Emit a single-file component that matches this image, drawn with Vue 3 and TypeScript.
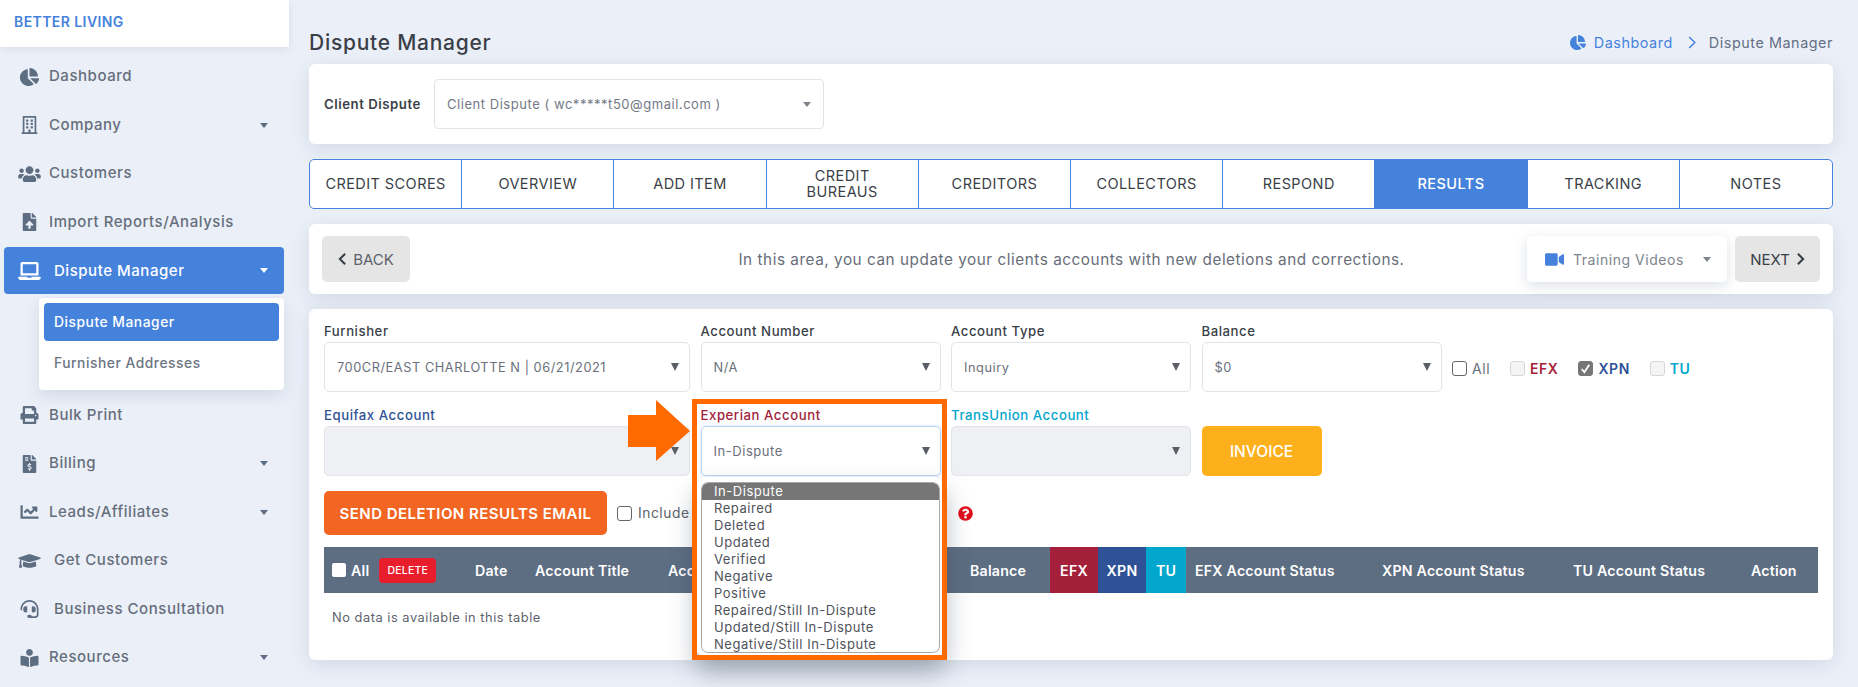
<template>
  <div class="page">
    <aside class="side">
      <div class="brand">BETTER LIVING</div>
      <nav class="nav">
        <template v-for="item in navItems" :key="item.label">
          <div class="nav-item" :class="{ 'nav-item--on': item.active }">
            <svg class="nav-icon" :viewBox="icons[item.icon].box"><path :d="icons[item.icon].d" /></svg>
            <span class="nav-label" :class="{ 'nav-label--far': item.far }">{{ item.label }}</span>
            <i v-if="item.caret" class="caret"></i>
          </div>
          <div v-if="item.active" class="sub">
            <div class="sub-item sub-item--on">Dispute Manager</div>
            <div class="sub-item">Furnisher Addresses</div>
          </div>
        </template>
      </nav>
    </aside>

    <main class="main">
      <div class="title-row">
        <h1 class="title">Dispute Manager</h1>
        <div class="crumbs">
          <svg class="crumb-icon" :viewBox="icons.pie.box"><path :d="icons.pie.d" /></svg>
          <span class="crumb-link">Dashboard</span>
          <svg class="crumb-sep" viewBox="0 0 8 14"><path d="M1 1l6 6-6 6" /></svg>
          <span>Dispute Manager</span>
        </div>
      </div>

      <section class="card client">
        <label class="client-label">Client Dispute</label>
        <div class="client-select">
          <span>Client Dispute ( wc*****t50@gmail.com )</span>
          <i class="caret caret--grey"></i>
        </div>
      </section>

      <div class="tabs">
        <div v-for="tab in tabs" :key="tab" class="tab" :class="{ 'tab--on': tab === 'RESULTS' }">{{ tab }}</div>
      </div>

      <section class="card steps">
        <button class="step-btn">
          <svg class="chev" viewBox="0 0 10 16"><path d="M8 2L2 8l6 6" /></svg>
          BACK
        </button>
        <p class="steps-text">In this area, you can update your clients accounts with new deletions and corrections.</p>
        <div class="training">
          <svg class="video" :viewBox="icons.video.box"><path :d="icons.video.d" /></svg>
          <span>Training Videos</span>
          <i class="caret caret--grey"></i>
        </div>
        <button class="step-btn step-btn--next">
          NEXT
          <svg class="chev" viewBox="0 0 10 16"><path d="M2 2l6 6-6 6" /></svg>
        </button>
      </section>

      <section class="card form">
        <div class="fields">
          <div v-for="f in fields" :key="f.label" class="field">
            <label class="field-label" :class="f.tone">{{ f.label }}</label>
            <div class="select" :class="{ 'select--off': f.off, 'select--focus': f.focus }">
              <span>{{ f.value }}</span>
              <i class="arrow"></i>
            </div>
          </div>
          <div class="invoice-cell"><button class="invoice">INVOICE</button></div>
        </div>

        <div class="bureau-checks">
          <span class="check"><i class="box box--dark"></i><span class="check-all">All</span></span>
          <span class="check"><i class="box"></i><b class="efx">EFX</b></span>
          <span class="check"><i class="box box--on">
            <svg viewBox="0 0 14 14"><path d="M3 7.5l2.8 3.5L11 3" /></svg>
          </i><b class="xpn">XPN</b></span>
          <span class="check"><i class="box"></i><b class="tu">TU</b></span>
        </div>

        <div class="send-row">
          <button class="send">SEND DELETION RESULTS EMAIL</button>
          <i class="box box--dark"></i>
          <span class="include">Include Deleted Results Only to Customers</span>
          <svg class="help" :viewBox="icons.help.box"><path :d="icons.help.d" /></svg>
        </div>

        <div class="thead">
          <div class="th th--all"><i class="head-box"></i><span>All</span><span class="del">DELETE</span></div>
          <div v-for="c in columns" :key="c.label" class="th" :class="c.cls">{{ c.label }}</div>
        </div>
        <p class="empty">No data is available in this table</p>
      </section>
    </main>

    <!-- annotation drawn over the page -->
    <svg class="mark-arrow" viewBox="0 0 62 61"><path d="M0 15h28V0l34 31-34 30V47H0z" /></svg>
    <ul class="options">
      <li v-for="(o, i) in options" :key="o" class="option" :class="{ 'option--on': i === 0 }">{{ o }}</li>
    </ul>
    <div class="mark-frame"></div>
  </div>
</template>

<script setup lang="ts">
interface Icon {
  box: string;
  d: string;
}
interface NavItem {
  label: string;
  icon: string;
  caret?: boolean;
  active?: boolean;
  far?: boolean;
}

const icons: Record<string, Icon> = {
  pie: { box: "0 0 544 512", d: "M527.79 288H290.5l158.03 158.03c6.04 6.04 15.98 6.53 22.19.68 38.7-36.46 65.32-85.61 73.13-140.86 1.34-9.46-6.51-17.85-16.06-17.85zm-15.83-64.8C503.72 103.74 408.26 8.28 288.8.04 279.68-.59 272 7.1 272 16.24V240h223.77c9.14 0 16.82-7.68 16.19-16.8zM224 288V50.71c0-9.55-8.39-17.4-17.84-16.06C86.99 51.49-4.1 155.6.14 280.37 4.5 408.51 114.83 513.59 243.03 511.98c50.4-.63 96.97-16.87 135.26-44.03 7.9-5.6 8.42-17.23 1.57-24.08L224 288z" },
  building: { box: "0 0 448 512", d: "M128 148v-40c0-6.6 5.4-12 12-12h40c6.6 0 12 5.4 12 12v40c0 6.6-5.4 12-12 12h-40c-6.6 0-12-5.4-12-12zm140 12h40c6.6 0 12-5.4 12-12v-40c0-6.6-5.4-12-12-12h-40c-6.6 0-12 5.4-12 12v40c0 6.6 5.4 12 12 12zm-128 96h40c6.6 0 12-5.4 12-12v-40c0-6.6-5.4-12-12-12h-40c-6.6 0-12 5.4-12 12v40c0 6.6 5.4 12 12 12zm128 0h40c6.6 0 12-5.4 12-12v-40c0-6.6-5.4-12-12-12h-40c-6.6 0-12 5.4-12 12v40c0 6.6 5.4 12 12 12zm-76 84v-40c0-6.6-5.4-12-12-12h-40c-6.6 0-12 5.4-12 12v40c0 6.6 5.4 12 12 12h40c6.6 0 12-5.4 12-12zm76 12h40c6.6 0 12-5.4 12-12v-40c0-6.6-5.4-12-12-12h-40c-6.6 0-12 5.4-12 12v40c0 6.6 5.4 12 12 12zm180 124v36H0v-36c0-6.6 5.4-12 12-12h19.5V24c0-13.3 10.7-24 24-24h337c13.3 0 24 10.7 24 24v440H436c6.6 0 12 5.4 12 12zM79.5 463H192v-67c0-6.6 5.4-12 12-12h40c6.6 0 12 5.4 12 12v67h112.5V49L80 48l-.5 415z" },
  users: { box: "0 0 640 512", d: "M96 224c35.3 0 64-28.7 64-64s-28.7-64-64-64-64 28.7-64 64 28.7 64 64 64zm448 0c35.3 0 64-28.7 64-64s-28.7-64-64-64-64 28.7-64 64 28.7 64 64 64zm32 32h-64c-17.6 0-33.5 7.1-45.1 18.6 40.3 22.1 68.9 62 75.1 109.4h66c17.7 0 32-14.3 32-32v-32c0-35.3-28.7-64-64-64zm-256 0c61.9 0 112-50.1 112-112S381.9 32 320 32 208 82.1 208 144s50.1 112 112 112zm76.8 32h-8.3c-20.8 10-43.9 16-68.5 16s-47.6-6-68.5-16h-8.3C179.6 288 128 339.6 128 403.2V432c0 26.5 21.5 48 48 48h288c26.5 0 48-21.5 48-48v-28.8c0-63.6-51.6-115.2-115.2-115.2zm-223.7-13.4C161.5 263.1 145.6 256 128 256H64c-35.3 0-64 28.7-64 64v32c0 17.7 14.3 32 32 32h65.9c6.3-47.4 34.9-87.3 75.2-109.4z" },
  upload: { box: "0 0 384 512", d: "M224 136V0H24C10.7 0 0 10.7 0 24v464c0 13.3 10.7 24 24 24h336c13.3 0 24-10.7 24-24V160H248c-13.2 0-24-10.8-24-24zm65.18 216.01H224v80c0 8.84-7.16 16-16 16h-32c-8.84 0-16-7.16-16-16v-80H94.82c-14.28 0-21.41-17.29-11.27-27.36l96.42-95.7c6.65-6.61 17.39-6.61 24.04 0l96.42 95.7c10.15 10.07 3.03 27.36-11.25 27.36zM377 105L279.1 7c-4.5-4.5-10.6-7-17-7H256v128h128v-6.1c0-6.3-2.5-12.4-7-16.9z" },
  laptop: { box: "0 0 640 512", d: "M624 416H381.54c-.74 19.81-14.71 32-32.74 32H288c-18.69 0-33.02-17.47-32.77-32H16c-8.8 0-16 7.2-16 16v16c0 35.2 28.8 64 64 64h512c35.2 0 64-28.8 64-64v-16c0-8.8-7.2-16-16-16zM576 48c0-26.4-21.6-48-48-48H112C85.6 0 64 21.6 64 48v336h512V48zm-64 272H128V64h384v256z" },
  print: { box: "0 0 512 512", d: "M448 192V77.25c0-8.49-3.37-16.62-9.37-22.63L393.37 9.37c-6-6-14.14-9.37-22.63-9.37H96C78.33 0 64 14.33 64 32v160c-35.35 0-64 28.65-64 64v112c0 8.84 7.16 16 16 16h48v96c0 17.67 14.33 32 32 32h320c17.67 0 32-14.33 32-32v-96h48c8.84 0 16-7.16 16-16V256c0-35.35-28.65-64-64-64zm-64 256H128v-96h256v96zm0-224H128V64h192v48c0 8.84 7.16 16 16 16h48v96zm48 72c-13.25 0-24-10.75-24-24 0-13.26 10.75-24 24-24s24 10.74 24 24c0 13.25-10.75 24-24 24z" },
  invoice: { box: "0 0 384 512", d: "M377 105L279.1 7c-4.5-4.5-10.6-7-17-7H256v128h128v-6.1c0-6.3-2.5-12.4-7-16.9zm-153 31V0H24C10.7 0 0 10.7 0 24v464c0 13.3 10.7 24 24 24h336c13.3 0 24-10.7 24-24V160H248c-13.2 0-24-10.8-24-24zM64 72c0-4.42 3.58-8 8-8h80c4.42 0 8 3.58 8 8v16c0 4.42-3.58 8-8 8H72c-4.42 0-8-3.58-8-8V72zm0 80v-16c0-4.42 3.58-8 8-8h80c4.42 0 8 3.58 8 8v16c0 4.42-3.58 8-8 8H72c-4.42 0-8-3.58-8-8zm144 263.88V440c0 4.42-3.58 8-8 8h-16c-4.42 0-8-3.58-8-8v-24.29c-11.29-.58-22.27-4.52-31.37-11.35-3.9-2.93-4.1-8.77-.57-12.14l11.75-11.21c2.77-2.64 6.89-2.76 10.13-.73 3.87 2.42 8.26 3.72 12.82 3.72h28.11c6.5 0 11.8-5.92 11.8-13.19 0-5.95-3.61-11.19-8.77-12.73l-45-13.5c-18.59-5.58-31.58-23.42-31.58-43.39 0-24.52 19.05-44.44 42.67-45.07V232c0-4.42 3.58-8 8-8h16c4.42 0 8 3.58 8 8v24.29c11.29.58 22.27 4.51 31.37 11.35 3.9 2.93 4.1 8.77.57 12.14l-11.75 11.21c-2.77 2.64-6.89 2.76-10.13.73-3.87-2.43-8.26-3.72-12.82-3.72h-28.11c-6.5 0-11.8 5.92-11.8 13.19 0 5.95 3.61 11.19 8.77 12.73l45 13.5c18.59 5.58 31.58 23.42 31.58 43.39 0 24.53-19.05 44.44-42.67 45.07z" },
  line: { box: "0 0 512 512", d: "M496 384H64V80c0-8.84-7.16-16-16-16H16C7.16 64 0 71.16 0 80v336c0 17.67 14.33 32 32 32h464c8.84 0 16-7.16 16-16v-32c0-8.84-7.16-16-16-16zM464 96H345.94c-21.38 0-32.09 25.85-16.97 40.97l32.4 32.4L288 242.75l-73.37-73.37c-12.5-12.5-32.76-12.5-45.25 0l-68.69 68.69c-6.25 6.25-6.25 16.38 0 22.63l22.62 22.62c6.25 6.25 16.38 6.25 22.63 0L192 237.25l73.37 73.37c12.5 12.5 32.76 12.5 45.25 0l96-96 32.4 32.4c15.12 15.12 40.97 4.41 40.97-16.97V112c.01-8.84-7.15-16-16-16z" },
  cap: { box: "0 0 640 512", d: "M622.34 153.2L343.4 67.5c-15.2-4.67-31.6-4.67-46.79 0L17.66 153.2c-23.54 7.23-23.54 38.36 0 45.59l48.63 14.94c-10.67 13.19-17.23 29.28-17.88 46.9C38.78 266.15 32 276.11 32 288c0 10.78 5.68 19.85 13.86 25.65L20.33 428.53C18.11 438.52 25.71 448 35.94 448h56.11c10.24 0 17.84-9.48 15.62-19.47L82.14 313.65C90.32 307.85 96 298.78 96 288c0-11.57-6.47-21.25-15.66-26.87.76-15.02 8.44-28.3 20.69-36.72L296.6 284.5c9.06 2.78 26.44 6.25 46.79 0l278.95-85.7c23.55-7.24 23.55-38.36 0-45.6zM352.79 315.09c-28.53 8.76-52.84 3.92-65.59 0l-145.02-44.55L128 384c0 35.35 85.96 64 192 64s192-28.65 192-64l-14.18-113.47-145.03 44.56z" },
  headset: { box: "0 0 512 512", d: "M192 208c0-17.67-14.33-32-32-32h-16c-35.35 0-64 28.65-64 64v48c0 35.35 28.65 64 64 64h16c17.67 0 32-14.33 32-32V208zm176 144c35.35 0 64-28.65 64-64v-48c0-35.35-28.65-64-64-64h-16c-17.67 0-32 14.33-32 32v112c0 17.67 14.33 32 32 32h16zM256 0C113.18 0 4.58 118.83 0 256v16c0 8.84 7.16 16 16 16h16c8.84 0 16-7.16 16-16v-16c0-114.69 93.31-208 208-208s208 93.31 208 208h-.12c.08 2.43.12 165.72.12 165.72 0 23.35-18.93 42.28-42.28 42.28H320c0-26.51-21.49-48-48-48h-32c-26.51 0-48 21.49-48 48s21.49 48 48 48h181.72c49.86 0 90.28-40.42 90.28-90.28V256C507.42 118.83 398.82 0 256 0z" },
  reader: { box: "0 0 512 512", d: "M352 96c0-53.02-42.98-96-96-96s-96 42.98-96 96 42.98 96 96 96 96-42.98 96-96zM233.59 241.1c-59.33-36.32-155.43-46.3-203.79-49.05C13.55 191.13 0 203.51 0 219.22v222.8c0 14.4 11.64 26.41 26.25 27.18 43.66 2.29 131.99 10.68 193.04 41.43 9.37 4.72 20.46-1.71 20.46-12.07V252.56c-.01-4.43-1.87-8.99-6.16-11.46zm248.61-49.05c-48.35 2.74-144.46 12.73-203.78 49.05-4.29 2.47-6.15 7.03-6.15 11.46v245.79c0 10.39 11.12 16.82 20.52 12.08 61.03-30.71 149.32-39.09 192.97-41.38 14.61-.77 26.25-12.78 26.25-27.18V219.22c-.01-15.71-13.56-28.09-29.81-27.17z" },
  video: { box: "0 0 576 512", d: "M336.2 64H47.8C21.4 64 0 85.4 0 111.8v288.4C0 426.6 21.4 448 47.8 448h288.4c26.4 0 47.8-21.4 47.8-47.8V111.8c0-26.4-21.4-47.8-47.8-47.8zm189.4 37.7L416 177.3v157.4l109.6 75.5c21.2 14.6 50.4-.3 50.4-25.8V127.5c0-25.4-29.1-40.4-50.4-25.8z" },
  help: { box: "0 0 512 512", d: "M504 256c0 136.997-111.043 248-248 248S8 392.997 8 256C8 119.083 119.043 8 256 8s248 111.083 248 248zM262.655 90c-54.497 0-89.255 22.957-116.549 63.758-3.536 5.286-2.353 12.415 2.715 16.258l34.699 26.31c5.205 3.947 12.621 3.008 16.665-2.122 17.864-22.658 30.113-35.797 57.303-35.797 20.429 0 45.698 13.148 45.698 32.958 0 14.976-12.363 22.667-32.534 33.976C247.128 238.528 216 254.941 216 296v4c0 6.627 5.373 12 12 12h56c6.627 0 12-5.373 12-12v-1.333c0-28.462 83.186-29.647 83.186-106.667 0-58.002-60.165-102-116.531-102zM256 338c-25.365 0-46 20.635-46 46 0 25.364 20.635 46 46 46s46-20.636 46-46c0-25.365-20.635-46-46-46z" },
};

const navItems: NavItem[] = [
  { label: "Dashboard", icon: "pie" },
  { label: "Company", icon: "building", caret: true },
  { label: "Customers", icon: "users" },
  { label: "Import Reports/Analysis", icon: "upload" },
  { label: "Dispute Manager", icon: "laptop", caret: true, active: true, far: true },
  { label: "Bulk Print", icon: "print" },
  { label: "Billing", icon: "invoice", caret: true },
  { label: "Leads/Affiliates", icon: "line", caret: true },
  { label: "Get Customers", icon: "cap", far: true },
  { label: "Business Consultation", icon: "headset", far: true },
  { label: "Resources", icon: "reader", caret: true },
];

const tabs = ["CREDIT SCORES", "OVERVIEW", "ADD ITEM", "CREDIT BUREAUS", "CREDITORS", "COLLECTORS", "RESPOND", "RESULTS", "TRACKING", "NOTES"];

const fields = [
  { label: "Furnisher", value: "700CR/EAST CHARLOTTE N | 06/21/2021" },
  { label: "Account Number", value: "N/A" },
  { label: "Account Type", value: "Inquiry" },
  { label: "Balance", value: "$0" },
  { label: "Equifax Account", value: "", off: true, tone: "tone-efx" },
  { label: "Experian Account", value: "In-Dispute", focus: true, tone: "tone-xpn" },
  { label: "TransUnion Account", value: "", off: true, tone: "tone-tu" },
];

const columns = [
  { label: "Date" },
  { label: "Account Title" },
  { label: "Account Number" },
  { label: "Balance" },
  { label: "EFX", cls: "th--efx" },
  { label: "XPN", cls: "th--xpn" },
  { label: "TU", cls: "th--tu" },
  { label: "EFX Account Status", cls: "th--tight" },
  { label: "XPN Account Status", cls: "th--tight" },
  { label: "TU Account Status", cls: "th--tight" },
  { label: "Action", cls: "th--tight" },
];

const options = ["In-Dispute", "Repaired", "Deleted", "Updated", "Verified", "Negative", "Positive", "Repaired/Still In-Dispute", "Updated/Still In-Dispute", "Negative/Still In-Dispute"];
</script>

<style scoped>
.page {
  position: relative;
  display: flex;
  width: 1858px;
  height: 687px;
  overflow: hidden;
  background: #ebf0f8;
  font-family: Inter, "Liberation Sans", sans-serif;
  font-size: 13.5px;
  letter-spacing: 0.04em;
  color: #667085;
}

/* sidebar */
.side { width: 289px; flex: none; }
.brand {
  height: 47px;
  padding: 0 14px;
  line-height: 44px;
  background: #fff;
  box-shadow: 0 2px 8px rgba(80, 100, 130, 0.12);
  color: #4582dc;
  font-size: 14px;
  font-weight: 600;
  letter-spacing: 0.03em;
}
.nav { padding: 6px 5px 0 4px; }
.nav-item {
  display: flex;
  align-items: center;
  height: 47px;
  margin-bottom: 1.5px;
  padding: 0 16px 0 14px;
  border-radius: 4px;
  color: #666e7c;
  font-size: 15px;
  font-weight: 500;
}
.nav-icon { width: 23px; height: 18px; flex: none; fill: #5d6d82; }
.nav-label { margin-left: 8px; flex: 1; padding-bottom: 2px; }
.nav-label--far { margin-left: 13px; }
.nav-item--on { margin-bottom: 4px; background: #4582dc; color: #fff; }
.nav-item--on .nav-icon { fill: #fff; }
.nav-item--on .nav-label { padding-bottom: 0; }
.caret {
  width: 0;
  height: 0;
  border-left: 4.5px solid transparent;
  border-right: 4.5px solid transparent;
  border-top: 5px solid #5d6d82;
}
.nav-item--on .caret { border-top-color: #fff; }
.caret--grey { border-top-color: #7d848e; }
.sub {
  margin: 0 0 1.5px 35px;
  height: 92px;
  padding: 5px;
  box-sizing: border-box;
  border-radius: 4px;
  background: #fff;
  box-shadow: 0 6px 16px rgba(80, 100, 130, 0.16);
  font-size: 13.8px;
  font-weight: 500;
  color: #6c7482;
}
.sub-item { height: 38px; padding-left: 10px; line-height: 38px; }
.sub-item + .sub-item { margin-top: 3px; }
.sub-item--on { border-radius: 4px; background: #4582dc; color: #fff; }

/* main column */
.main { flex: 1; min-width: 0; padding: 26px 25px 0 20px; }
.title-row {
  display: flex;
  align-items: center;
  justify-content: space-between;
  height: 32px;
  margin-bottom: 6px;
}
.title { margin: 0; color: #3a3f48; font-size: 21px; font-weight: 500; letter-spacing: 0.035em; }
.crumbs { display: flex; align-items: center; color: #667085; font-size: 14.4px; }
.crumb-icon { width: 16px; height: 15px; margin-right: 8px; fill: #4582dc; }
.crumb-link { color: #4582dc; }
.crumb-sep { width: 8px; height: 13px; margin: 0 13px 0 15px; fill: none; stroke: #4582dc; stroke-width: 1.6; }
.card {
  border-radius: 6px;
  background: #fff;
  box-shadow: 0 5px 20px rgba(80, 100, 130, 0.16);
}
.client {
  display: flex;
  align-items: center;
  height: 80px;
  padding-left: 15px;
}
.client-label { width: 110px; color: #3a3f48; font-size: 13.2px; font-weight: 600; }
.client-select {
  display: flex;
  align-items: center;
  justify-content: space-between;
  width: 390px;
  height: 50px;
  padding: 0 12px;
  box-sizing: border-box;
  border: 1px solid #e2e4e8;
  border-radius: 4px;
  font-size: 13px;
  color: #737985;
}
.tabs {
  display: grid;
  grid-template-columns: repeat(10, 1fr);
  height: 50px;
  margin: 15px 0;
  box-sizing: border-box;
  border: 1px solid #4582dc;
  border-radius: 5px;
  overflow: hidden;
  background: #fff;
}
.tab {
  display: flex;
  align-items: center;
  justify-content: center;
  padding: 0 14px;
  text-align: center;
  border-right: 1px solid #4582dc;
  color: #3a3f48;
  font-size: 14.5px;
  line-height: 16px;
  letter-spacing: 0.03em;
}
.tab:last-child { border-right: 0; }
.tab--on { background: #4582dc; color: #fff; font-weight: 500; }
.steps {
  display: flex;
  align-items: center;
  height: 70px;
  margin-bottom: 15px;
  padding: 0 13px;
}
.step-btn {
  display: flex;
  align-items: center;
  justify-content: center;
  gap: 6px;
  width: 88px;
  height: 46px;
  border: 0;
  border-radius: 5px;
  background: #e5e5e5;
  color: #5c626c;
  font: inherit;
  font-size: 15px;
}
.step-btn--next { width: 85px; margin-left: 8px; color: #3a3f48; }
.chev { width: 9px; height: 14px; fill: none; stroke: #3a3f48; stroke-width: 2.4; }
.steps-text { flex: 1; margin: 0; padding-left: 206px; text-align: center; font-size: 15.3px; color: #686e79; white-space: nowrap; }
.training {
  display: flex;
  align-items: center;
  width: 200px;
  height: 46px;
  padding: 0 16px 0 18px;
  box-sizing: border-box;
  border-radius: 5px;
  box-shadow: 0 4px 14px rgba(80, 100, 130, 0.2);
  font-size: 14px;
  color: #7d848e;
}
.training span { flex: 1; }
.video { width: 19px; height: 17px; margin-right: 9px; fill: #4582dc; }

/* results form */
.form { height: 351px; padding: 0 15px; position: relative; }
.fields {
  display: grid;
  grid-template-columns: 366px 240px 240px 240px;
  column-gap: 10.5px;
  row-gap: 14px;
  padding-top: 13px;
}
.field-label {
  display: block;
  height: 20px;
  color: #3a3f48;
  font-size: 13.2px;
  font-weight: 500;
  line-height: 18px;
}
.tone-efx { color: #2f5296; }
.tone-xpn { color: #a31f3a; }
.tone-tu { color: #03a6cc; }
.select {
  display: flex;
  align-items: center;
  justify-content: space-between;
  height: 50px;
  padding: 0 10px 0 12px;
  box-sizing: border-box;
  border: 1px solid #e2e4e8;
  border-radius: 5px;
  font-size: 12.8px;
  color: #6a707b;
}
.select--off { background: #eff0f4; }
.select--focus { border-color: #b9d4f5; box-shadow: 0 0 3px rgba(120, 170, 240, 0.4); font-size: 13px; }
.arrow {
  width: 0;
  height: 0;
  border-left: 4px solid transparent;
  border-right: 4px solid transparent;
  border-top: 8px solid #5a5f67;
}
.invoice-cell { align-self: end; }
.invoice {
  width: 120px;
  height: 50px;
  border: 0;
  border-radius: 5px;
  background: #fdb01c;
  color: #fff;
  font: inherit;
  font-size: 15.5px;
  font-weight: 500;
}
.bureau-checks {
  position: absolute;
  top: 51px;
  left: 1143px;
  display: flex;
  align-items: center;
  gap: 20px;
  font-size: 14px;
}
.check { display: flex; align-items: center; gap: 5px; }
.check b { font-weight: 600; }
.check-all { color: #6a707b; }
.efx { color: #a31f3a; }
.xpn { color: #2f5296; }
.tu { color: #03a6cc; }
.box {
  display: block;
  width: 15px;
  height: 15px;
  flex: none;
  box-sizing: border-box;
  border: 1px solid #d4d6da;
  border-radius: 3px;
  background: #f4f4f5;
}
.box--dark { border-color: #666; background: #fff; }
.box--on { border-color: #767676; background: #767676; }
.box--on svg { display: block; width: 13px; height: 13px; fill: none; stroke: #fff; stroke-width: 2; }
.send-row { display: flex; align-items: center; height: 44px; margin-top: 15px; }
.send {
  width: 283px;
  height: 44px;
  margin-right: 10px;
  border: 0;
  border-radius: 5px;
  background: #f26522;
  color: #fff;
  font: inherit;
  font-size: 15px;
  font-weight: 600;
  letter-spacing: 0.03em;
  white-space: nowrap;
}
.include { flex: none; width: 316px; margin-left: 6px; font-size: 13.8px; color: #5c626c; white-space: nowrap; overflow: hidden; }
.help { width: 15px; height: 15px; margin-left: 4px; fill: #e0101e; }
.thead {
  display: grid;
  grid-template-columns: 136px 60px 133px 302px 95px 48px 48px 40px 187px 191px 178px 1fr;
  height: 46px;
  margin-top: 12px;
  background: #5d6d82;
  color: #fff;
  font-size: 14.2px;
  font-weight: 600;
  letter-spacing: 0.015em;
}
.th { display: flex; align-items: center; padding-left: 15px; white-space: nowrap; }
.th--tight { padding-left: 9px; }
.th--all { padding-left: 8px; gap: 5px; }
.head-box { width: 14px; height: 14px; border-radius: 2px; background: #fff; }
.del {
  margin-left: 5px;
  padding: 0 8px;
  height: 25px;
  line-height: 25px;
  border-radius: 4px;
  background: #e91e2d;
  font-size: 10.5px;
  font-weight: 500;
}
.th--efx, .th--xpn, .th--tu { padding: 0; justify-content: center; }
.th--efx { background: #a31f3a; }
.th--xpn { background: #2f5296; }
.th--tu { background: #03a6cc; }
.empty { margin: 17px 0 0 8px; font-size: 12.8px; color: #5c626c; }

/* annotation layer */
.mark-arrow { position: absolute; left: 628px; top: 400px; width: 62px; height: 61px; fill: #ff6a00; }
.mark-frame {
  position: absolute;
  left: 692px;
  top: 399px;
  width: 255px;
  height: 261px;
  box-sizing: border-box;
  border: 5px solid #ff6a00;
}
.options {
  position: absolute;
  left: 701px;
  top: 482px;
  width: 239px;
  height: 171px;
  margin: 0;
  padding: 0;
  list-style: none;
  box-sizing: border-box;
  border: 1px solid #a8a8a8;
  border-radius: 7px;
  overflow: hidden;
  background: #fff;
  outline: 5px solid #fff;
  box-shadow: 0 14px 24px 6px rgba(50, 60, 80, 0.35);
  font-size: 13px;
  color: #4e535b;
}
.option { height: 17px; padding-left: 12px; line-height: 17px; }
.option--on { background: #767676; color: #fff; }
</style>

<style>
html, body { margin: 0; background: #ebf0f8; }
</style>
